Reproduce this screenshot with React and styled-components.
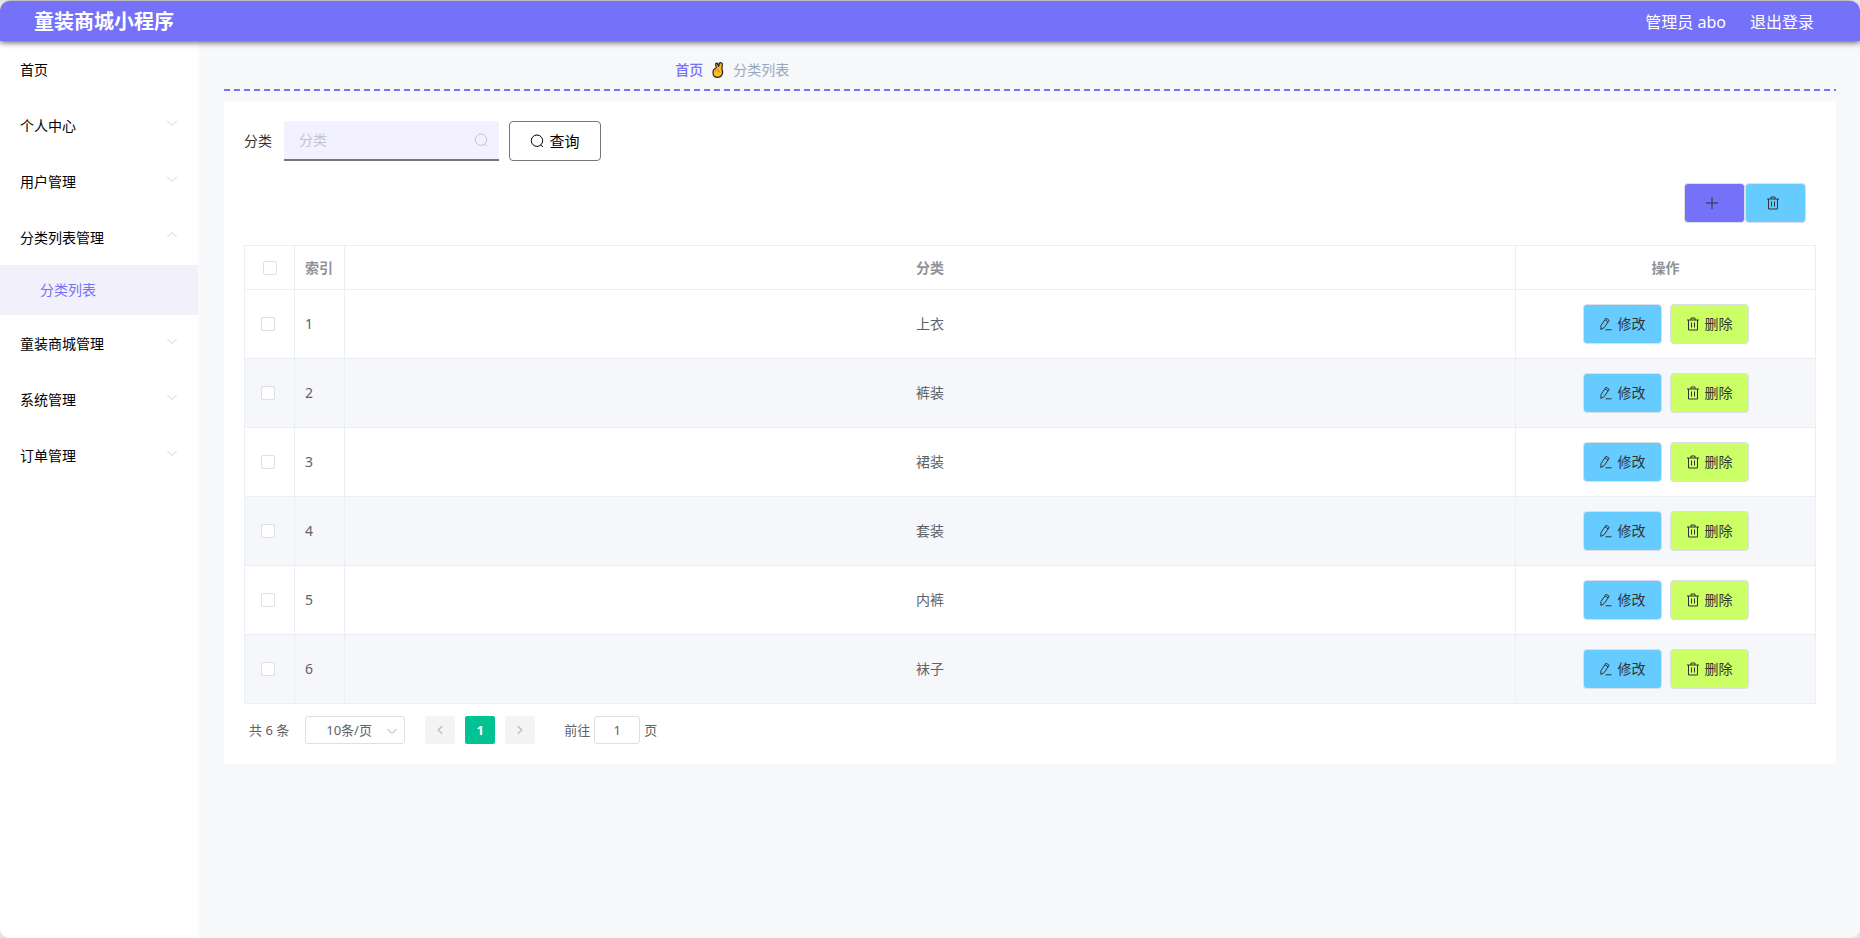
import { useState } from 'react';
import styled, { createGlobalStyle } from 'styled-components';

const GlobalStyle = createGlobalStyle`
    * {
        box-sizing: border-box;
    }

    body {
        margin: 0;
        background-color: #e6e6e6;
        font-family: "Noto Sans", "Noto Sans CJK SC", sans-serif;
        font-size: 14px;
        line-height: 20px;
        color: #333;
    }

    button, input, select {
        font-family: inherit;
        font-size: 14px;
        line-height: 20px;
    }

    a {
        text-decoration: none;
        color: inherit;
    }
`;

const Page = styled.div`
    min-height: 100vh;
    padding-top: 1px;
    display: flex;
    flex-direction: column;
    background-color: #f7f8fa;
    border-radius: 10px;
    overflow: hidden;
`;

const Header = styled.header`
    height: 40px;
    padding: 2px 46px 0 34px;
    display: flex;
    align-items: center;
    justify-content: space-between;
    background-color: #7571f9;
    border-radius: 10px 10px 0 0;
    box-shadow: 0 1px 6px #444;
    color: #fff;
    position: relative;

    h1 {
        margin: 0;
        font-size: 20px;
        font-weight: 700;
        line-height: 38px;
    }
`;

const UserLinks = styled.div`
    display: flex;
    gap: 24px;
    font-size: 16px;
`;

const Body = styled.div`
    flex: 1;
    display: flex;
`;

const Sidebar = styled.nav`
    flex: 0 0 200px;
    background-color: #fff;
    border-right: 2px solid #fafafa;
`;

const MenuItem = styled.button`
    width: 100%;
    height: 56px;
    padding: 2px 20px 0;
    display: flex;
    align-items: center;
    justify-content: space-between;
    border: 0;
    background: none;
    color: #000;
    cursor: pointer;

    svg {
        color: #dcdfe6;
        margin-bottom: 6px;
    }
`;

const SubItem = styled.a`
    height: 50px;
    padding-left: 40px;
    display: flex;
    align-items: center;
    background-color: #f2f0fb;

    && {
        color: #7571f9;
    }
`;

const Main = styled.main`
    flex: 1;
    min-width: 0;
    padding: 8px 24px 24px;
`;

const Breadcrumb = styled.div`
    height: 40px;
    padding: 2px 0 0 28%;
    display: flex;
    align-items: center;
    gap: 8px;
    color: #97a8be;

    a {
        color: #7571f9;
        font-weight: 500;
    }
`;

const Divider = styled.div`
    height: 2px;
    margin-bottom: 10px;
    background-image: repeating-linear-gradient(90deg, #7571f9 0 6px, transparent 6px 10px);
`;

const Card = styled.section`
    padding: 20px;
    background-color: #fff;
`;

const SearchForm = styled.form`
    display: flex;
    align-items: center;

    label {
        margin-right: 12px;
    }
`;

const SearchBox = styled.div`
    width: 215px;
    height: 40px;
    margin-right: 10px;
    padding: 0 11px 0 15px;
    display: flex;
    align-items: center;
    background-color: #f3f1ff;
    border-bottom: 2px solid #757575;
    color: #c0c4cc;

    input {
        flex: 1;
        min-width: 0;
        padding: 0;
        border: 0;
        outline: none;
        background: none;
    }

    input::placeholder {
        color: #c0c4cc;
    }
`;

const SearchButton = styled.button`
    width: 92px;
    height: 40px;
    display: flex;
    align-items: center;
    justify-content: center;
    gap: 5px;
    border: 1px solid #757575;
    border-radius: 4px;
    background-color: #fff;
    color: #000;
    font-size: 15px;
    cursor: pointer;
`;

const Toolbar = styled.div`
    padding: 22px 10px 22px 0;
    display: flex;
    justify-content: flex-end;
`;

const ColorButton = styled.button`
    width: ${(props) => (props.$wide ? '79px' : '61px')};
    height: 40px;
    padding: 0;
    display: flex;
    align-items: center;
    justify-content: center;
    gap: 5px;
    border: 1px solid #dcdfe6;
    border-radius: 4px;
    background-color: ${(props) => props.$color};
    color: #333;
    cursor: pointer;
`;

const ToolButton = styled(ColorButton)`
    padding-right: 6px;
`;

const Table = styled.table`
    width: 100%;
    table-layout: fixed;
    border-collapse: collapse;
    color: #606266;

    th, td {
        padding: 0 10px;
        border: 1px solid #ebeef5;
        text-align: left;
    }

    th {
        height: 44px;
        color: #909399;
        font-weight: 700;
    }

    td {
        height: 69px;
    }

    th:nth-child(n+3), td:nth-child(n+3) {
        text-align: center;
    }

    tbody tr:nth-child(even) {
        background-color: #f5f7fa;
    }

    .check {
        width: 50px;
        padding: 0 16px;
    }

    th.check {
        padding: 0 18px;
    }

    .index {
        width: 50px;
    }

    .actions {
        width: 300px;
    }
`;

const Checkbox = styled.input`
    appearance: none;
    display: block;
    width: 14px;
    height: 14px;
    margin: 0;
    border: 1px solid #dcdfe6;
    border-radius: 2px;
    background-color: #fff;

    &:checked {
        background-color: #7571f9;
    }
`;

const RowActions = styled.div`
    display: flex;
    justify-content: center;
    gap: 8px;
`;

const Pagination = styled.div`
    padding: 12px 5px 0;
    display: flex;
    align-items: center;
    color: #606266;
    font-size: 13px;
`;

const SizeSelect = styled.div`
    position: relative;
    margin: 0 20px 0 16px;

    select {
        appearance: none;
        display: block;
        width: 100px;
        height: 28px;
        padding: 0 18px 0 20px;
        border: 1px solid #dcdfe6;
        border-radius: 3px;
        background-color: #fff;
        color: #606266;
        font-size: 13px;
    }

    svg {
        position: absolute;
        top: 9px;
        right: 7px;
        color: #c0c4cc;
        pointer-events: none;
    }
`;

const PageButton = styled.button`
    width: 30px;
    height: 28px;
    margin-right: 10px;
    padding: 0;
    display: flex;
    align-items: center;
    justify-content: center;
    border: 0;
    border-radius: 2px;
    background-color: ${(props) => (props.$active ? '#00c292' : '#f4f4f5')};
    color: ${(props) => (props.$active ? '#fff' : '#c0c4cc')};
    font-size: 13px;
    font-weight: 700;
`;

const Jumper = styled.label`
    margin-left: 19px;
    display: flex;
    align-items: center;
    gap: 4px;

    input {
        width: 46px;
        height: 28px;
        padding: 0;
        border: 1px solid #dcdfe6;
        border-radius: 3px;
        color: #606266;
        font-size: 13px;
        text-align: center;
    }
`;

function Icon({ size = 14, width = 1, children }) {
    return (
        <svg width={size} height={size} viewBox="0 0 14 14" fill="none" stroke="currentColor" strokeWidth={width} aria-hidden="true">
            {children}
        </svg>
    );
}

const Chevron = ({ up }) => (
    <Icon size={12} width={1.2}><path d={up ? 'M1.5 9.5 7 4l5.5 5.5' : 'M1.5 4.5 7 10l5.5-5.5'} /></Icon>
);

const SearchIcon = () => (
    <Icon><circle cx="7" cy="6.7" r="5.7" /><path d="M10.5 10.7 12.8 13" /></Icon>
);

const PlusIcon = () => (
    <Icon><path d="M7 1v12M1 7h12" /></Icon>
);

const TrashIcon = () => (
    <Icon><path d="M1 3h12M2.5 3v10h9V3M5 3V1h4v2M5.5 5.5v5M8.5 5.5v5" /></Icon>
);

const EditIcon = () => (
    <Icon><path d="M2 8.5 7 1.2l3.2 2.1-5 7.3L1.8 12.500zM6 2.800l3.200 2.100M6.500 12.800h6" /></Icon>
);

const ArrowIcon = ({ right }) => (
    <Icon size={12} width={2}><path d={right ? 'M4.5 2.5 9 7l-4.5 4.5' : 'M9.5 2.5 5 7l4.5 4.5'} /></Icon>
);

function HandIcon() {
    return (
        <svg width="14" height="16" viewBox="0 0 14 16" fill="#fdb92e" stroke="#222" strokeWidth="1.2" strokeLinejoin="round" aria-hidden="true">
            <path d="M5.2 6 4.7 2.2C4.700 1 6.400.8 6.800 2L7.500 4.500 8.300 1.500C8.800.3 11.300.5 11.300 2L10.900 7.500C11.700 8.600 11.700 11 11 12.800 10 15 8.500 15.400 6.500 15.400 3.500 15.400 2 13.500 2 10.500 2 8 3 6.500 5.200 6z" />
            <path d="M4.500 7.500v2M7 7v2.500l2.500.5" strokeWidth=".7" stroke="#b87512" fill="none" />
        </svg>
    );
}

const menus = [
    { name: '个人中心' },
    { name: '用户管理' },
    { name: '分类列表管理', children: ['分类列表'] },
    { name: '童装商城管理' },
    { name: '系统管理' },
    { name: '订单管理' },
];

const rows = ['上衣', '裤装', '裙装', '套装', '内裤', '袜子'];

function App() {

    const [opened, setOpened] = useState('分类列表管理');
    const [keyword, setKeyword] = useState('');
    const [page, setPage] = useState('1');

    return (
        <Page>
            <GlobalStyle />
            <Header>
                <h1>童装商城小程序</h1>
                <UserLinks>
                    <span>管理员 abo</span>
                    <a href="#logout">退出登录</a>
                </UserLinks>
            </Header>
            <Body>
                <Sidebar>
                    <MenuItem>首页</MenuItem>
                    {menus.map((menu) => (
                        <div key={menu.name}>
                            <MenuItem onClick={() => setOpened(opened === menu.name ? '' : menu.name)}>
                                {menu.name}
                                <Chevron up={opened === menu.name} />
                            </MenuItem>
                            {opened === menu.name && menu.children?.map((child) => (
                                <SubItem key={child} href="#list">{child}</SubItem>
                            ))}
                        </div>
                    ))}
                </Sidebar>
                <Main>
                    <Breadcrumb>
                        <a href="#home">首页</a>
                        <HandIcon />
                        <span>分类列表</span>
                    </Breadcrumb>
                    <Divider />
                    <Card>
                        <SearchForm onSubmit={(e) => e.preventDefault()}>
                            <label htmlFor="keyword">分类</label>
                            <SearchBox>
                                <input type="text" id="keyword" placeholder="分类" value={keyword} onChange={(e) => setKeyword(e.target.value)} />
                                <SearchIcon />
                            </SearchBox>
                            <SearchButton type="submit"><SearchIcon />查询</SearchButton>
                        </SearchForm>
                        <Toolbar>
                            <ToolButton $color="#7571f9" aria-label="新增"><PlusIcon /></ToolButton>
                            <ToolButton $color="#66ccff" aria-label="删除"><TrashIcon /></ToolButton>
                        </Toolbar>
                        <Table>
                            <thead>
                                <tr>
                                    <th className="check"><Checkbox type="checkbox" aria-label="全选" /></th>
                                    <th className="index">索引</th>
                                    <th>分类</th>
                                    <th className="actions">操作</th>
                                </tr>
                            </thead>
                            <tbody>
                                {rows.map((name, i) => (
                                    <tr key={name}>
                                        <td className="check"><Checkbox type="checkbox" aria-label={name} /></td>
                                        <td>{i + 1}</td>
                                        <td>{name}</td>
                                        <td>
                                            <RowActions>
                                                <ColorButton $wide $color="#66ccff"><EditIcon />修改</ColorButton>
                                                <ColorButton $wide $color="#ccff66"><TrashIcon />删除</ColorButton>
                                            </RowActions>
                                        </td>
                                    </tr>
                                ))}
                            </tbody>
                        </Table>
                        <Pagination>
                            <span>共 6 条</span>
                            <SizeSelect>
                                <select aria-label="每页条数">
                                    <option>10条/页</option>
                                    <option>20条/页</option>
                                </select>
                                <Chevron />
                            </SizeSelect>
                            <PageButton disabled aria-label="上一页"><ArrowIcon /></PageButton>
                            <PageButton $active>1</PageButton>
                            <PageButton disabled aria-label="下一页"><ArrowIcon right /></PageButton>
                            <Jumper>
                                前往
                                <input type="text" value={page} onChange={(e) => setPage(e.target.value)} />
                                页
                            </Jumper>
                        </Pagination>
                    </Card>
                </Main>
            </Body>
        </Page>
    );
}

export default App;
